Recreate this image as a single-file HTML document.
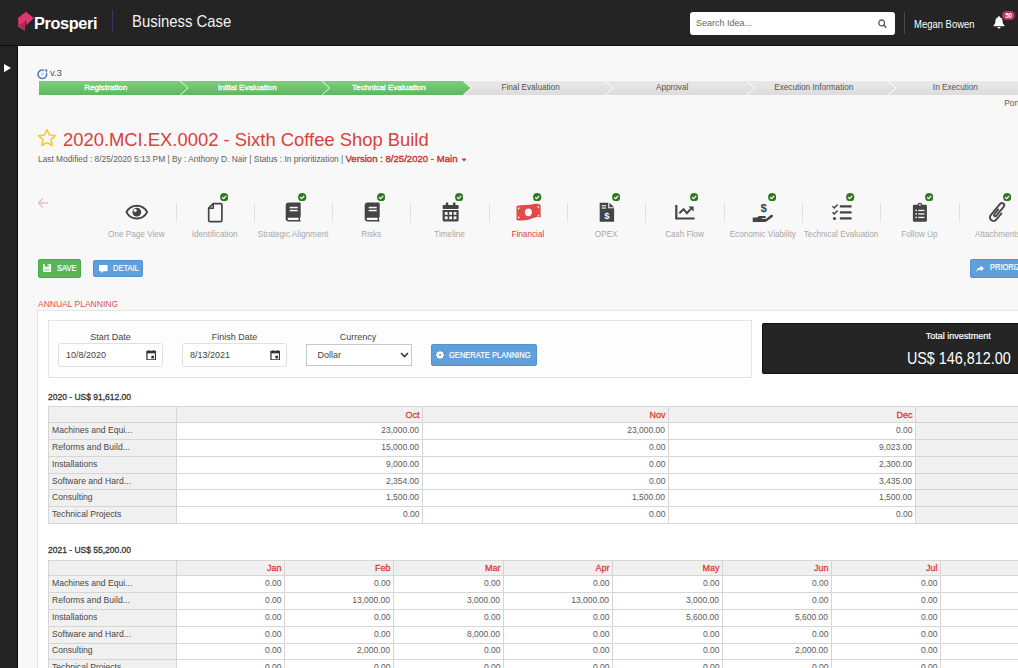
<!DOCTYPE html>
<html lang="en">
<head>
<meta charset="utf-8">
<title>Business Case</title>
<style>
*{box-sizing:border-box;margin:0;padding:0}
html,body{width:1018px;height:668px;overflow:hidden}
body{position:relative;background:#f8f8f8;font-family:"Liberation Sans",sans-serif;color:#444;font-size:9px}
.abs{position:absolute}
#hdr{position:absolute;left:0;top:0;width:1018px;height:46px;background:#242424;border-bottom:1px solid #0d0d0d;z-index:3}
#side{position:absolute;left:0;top:46px;width:18px;height:622px;background:#242424;border-right:1px solid #0d0d0d;z-index:3}
#wst{position:absolute;left:18px;top:46px;width:1000px;height:622px;border-left:2px solid #fff;border-top:2px solid #fff}
#brand{position:absolute;left:34px;top:11.500px;font-weight:bold;font-size:17.200px;color:#fff;line-height:22px;letter-spacing:-0.400px;transform:scaleX(0.948);transform-origin:0 50%}
#hdiv{position:absolute;left:112px;top:10px;width:1px;height:22px;background:#333c5e}
#app{position:absolute;left:131.500px;top:10px;font-size:17px;color:#f2f2f2;line-height:24px;transform:scaleX(0.875);transform-origin:0 50%;white-space:nowrap}
#search{position:absolute;left:690px;top:12px;width:204.500px;height:22.500px;background:#fff;border-radius:3px}
#search span{position:absolute;left:6px;top:0.700px;line-height:21px;font-size:9px;color:#666}
#udiv{position:absolute;left:904px;top:12px;width:1px;height:22px;background:#484848}
#user{position:absolute;left:914px;top:13.600px;line-height:22px;font-size:10.200px;color:#fff;white-space:nowrap;transform:scaleX(0.93);transform-origin:0 50%}
#badge{position:absolute;left:1002px;top:10.800px;width:13px;height:9px;border-radius:4.500px;background:#b9335f;color:#fff;font-size:6.500px;font-weight:bold;line-height:9px;text-align:center;letter-spacing:-0.300px}
</style>
</head>
<body>
<div id="hdr">
  <svg class="abs" style="left:18px;top:11px" width="17" height="21" viewBox="18 11 17 21"><path d="M25.900 11.700 L33.900 18.100 L26.400 25.200 L26.100 20.600 L25.400 20.900 L24.900 30.800 L18.200 26.700 L18.200 17.800 Z" fill="#e1366d"/><path d="M18.300 25.300 L24.900 30.800 L25.400 21 Z" fill="#a82b63"/></svg>
  <div id="brand">Prosperi</div>
  <div id="hdiv"></div>
  <div id="app">Business Case</div>
  <div id="search"><span>Search Idea...</span>
    <svg class="abs" style="left:188px;top:7px" width="9" height="10" viewBox="0 0 9 10"><circle cx="3.700" cy="3.900" r="2.900" fill="none" stroke="#555" stroke-width="1.300"/><path d="M5.800 6.100 L8.200 8.800" stroke="#555" stroke-width="1.500"/></svg>
  </div>
  <div id="udiv"></div>
  <div id="user">Megan Bowen</div>
  <svg class="abs" style="left:993px;top:16px" width="12" height="13" viewBox="0 0 12 13"><path d="M6 0.300 C5.300 0.300 5 0.800 5 1.300 C3 1.900 2.400 3.600 2.400 5.300 C2.400 7.600 1.600 8.400 0.600 9.300 L0.600 10.300 L11.400 10.300 L11.400 9.300 C10.400 8.400 9.600 7.600 9.600 5.300 C9.600 3.600 9 1.900 7 1.300 C7 0.800 6.700 0.300 6 0.300 Z M4.500 11 A1.500 1.500 0 0 0 7.500 11 Z" fill="#fff"/></svg>
  <div id="badge">50</div>
</div>
<div id="side"><svg class="abs" style="left:3.800px;top:18px" width="7" height="8.200" viewBox="0 0 7 9" preserveAspectRatio="none"><path d="M0 0 L7 4.5 L0 9 Z" fill="#fff"/></svg></div>

<style>
#ver{position:absolute;left:50px;top:67.100px;font-size:9.600px;line-height:12px;color:#50555c;letter-spacing:-0.150px}
#steps{position:absolute;left:39px;top:81px;width:979px;height:14px;overflow:hidden}
#steps svg{position:absolute;left:0;top:0}
.st{position:absolute;top:0;height:14px;line-height:14px;font-size:8.200px;text-align:center;width:141.6px;white-space:nowrap}
.st.g{color:#fff;font-size:8.100px;-webkit-text-stroke:0.300px #fff}
.st.n{color:#555}
#port{position:absolute;left:1004.300px;top:97px;font-size:8.350px;line-height:12px;color:#606060}
</style>
<svg class="abs" style="left:37.400px;top:68.600px" width="11" height="11" viewBox="0 0 11 11"><path d="M9.450 4.200 A4.300 4.300 0 1 1 7.100 1.400" fill="none" stroke="#4a80b8" stroke-width="1.500"/><path d="M7.600 0 L10.400 0.800 L9.800 4.300 Z" fill="#4a80b8"/><path d="M4.500 6.400 L6.300 4" stroke="#9dbfe0" stroke-width="1.300"/></svg><div id="ver">v.3</div>
<div id="steps"><svg width="979" height="14" viewBox="0 0 979 14"><defs><linearGradient id="gg" x1="0" y1="0" x2="0" y2="1"><stop offset="0" stop-color="#7fce80"/><stop offset="1" stop-color="#5cb85c"/></linearGradient><linearGradient id="gn" x1="0" y1="0" x2="0" y2="1"><stop offset="0" stop-color="#e9e9e9"/><stop offset="1" stop-color="#dcdcdc"/></linearGradient></defs><rect x="0" y="0" width="979" height="14" fill="url(#gn)"/><path d="M0 0 H423.8 L431.8 7 L423.8 14 H0 Z" fill="url(#gg)"/><path d="M424.3 0 L432.3 7 L424.3 14" fill="none" stroke="#fbfbfb" stroke-width="1"/><path d="M141.1 0 L149.1 7 L141.1 14" fill="none" stroke="#eafbe9" stroke-width="1"/><path d="M282.7 0 L290.7 7 L282.7 14" fill="none" stroke="#eafbe9" stroke-width="1"/><path d="M565.9 0 L573.9 7 L565.9 14" fill="none" stroke="#fff" stroke-width="1"/><path d="M707.5 0 L715.5 7 L707.5 14" fill="none" stroke="#fff" stroke-width="1"/><path d="M849.1 0 L857.1 7 L849.1 14" fill="none" stroke="#fff" stroke-width="1"/></svg><div class="st g" style="left:-4.0px">Registration</div><div class="st g" style="left:137.6px">Initial Evaluation</div><div class="st g" style="left:279.2px">Technical Evaluation</div><div class="st n" style="left:420.8px">Final Evaluation</div><div class="st n" style="left:562.4px">Approval</div><div class="st n" style="left:704.0px">Execution Information</div><div class="st n" style="left:845.6px">In Execution</div></div><div id="port">Port</div>


<style>
#title{position:absolute;left:63px;top:126.500px;font-size:18.4px;line-height:26px;color:#d9413d;white-space:nowrap;transform-origin:0 50%}
#sub{position:absolute;left:38px;top:152.600px;font-size:8.350px;line-height:12px;color:#606060;white-space:nowrap}
#sub b{color:#c9302c;font-size:9.600px;font-weight:normal;-webkit-text-stroke:0.350px #c9302c}
</style>
<svg class="abs" style="left:37px;top:128px" width="20" height="19" viewBox="0 0 20 19"><path d="M10 1.6 L12.5 7 L18.4 7.7 L14 11.7 L15.2 17.5 L10 14.6 L4.800 17.5 L6 11.7 L1.600 7.7 L7.500 7 Z" fill="none" stroke="#f8c830" stroke-width="1.6" stroke-linejoin="round"/></svg>
<div id="title">2020.MCI.EX.0002 - Sixth Coffee Shop Build</div>
<div id="sub">Last Modified : 8/25/2020 5:13 PM | By : Anthony D. Nair | Status : In prioritization | <b>Version : 8/25/2020 - Main</b></div>
<svg class="abs" style="left:461px;top:158px" width="6" height="4" viewBox="0 0 6 4"><path d="M0.500 0.500 L5.500 0.500 L3 3.500 Z" fill="#d32f2f"/></svg>


<!--ICONS-START--><style>
.ic{position:absolute;top:199px;width:26px;height:26px}
.lb{position:absolute;top:228.700px;width:100px;text-align:center;font-size:8.200px;line-height:12px;color:#a8a8a8;white-space:nowrap}
.lb.on{color:#d9413d}
.dv{position:absolute;top:203px;width:1px;height:19px;background:#e2e2e2}
.ck{position:absolute;top:193px;width:8.400px;height:8.400px}
</style>
<svg class="abs" style="left:37px;top:197px" width="13" height="12" viewBox="0 0 13 12"><path d="M11.500 6 H1.500 M5.800 1.500 L1.300 6 L5.800 10.500" fill="none" stroke="#f3b9c4" stroke-width="1.300"/></svg>
<svg class="ic" style="left:123.75px" viewBox="0 0 26 26"><path d="M2.400 13.100 C5.200 8 8.800 6.700 12.800 6.700 C16.800 6.700 20.400 8 23.200 13.100 C20.400 18.200 16.800 19.500 12.800 19.500 C8.800 19.500 5.200 18.200 2.400 13.100 Z" fill="none" stroke="#444" stroke-width="1.900" stroke-linejoin="round"/><circle cx="12.800" cy="13.100" r="4.400" fill="#444"/><circle cx="11.200" cy="11.400" r="1.600" fill="#f8f8f8"/></svg><div class="lb" style="left:86.40px">One Page View</div><div class="dv" style="left:175.50px"></div>
<svg class="ic" style="left:202.06px" viewBox="0 0 26 26"><path d="M11.300 4.600 H18.500 Q19.900 4.600 19.900 6 V21.200 Q19.900 22.600 18.500 22.600 H8.100 Q6.700 22.600 6.700 21.200 V9.200 Z" fill="none" stroke="#444" stroke-width="1.700" stroke-linejoin="round"/><path d="M11.300 4.600 V9.200 H6.700" fill="none" stroke="#444" stroke-width="1.500" stroke-linejoin="round"/></svg><svg class="ck" style="left:220.00px" viewBox="0 0 9 9"><circle cx="4.500" cy="4.500" r="4.400" fill="#2c7a1f"/><path d="M2.300 4.600 L3.900 6.100 L6.700 3.100" fill="none" stroke="#fff" stroke-width="1.400"/></svg><div class="lb" style="left:164.70px">Identification</div><div class="dv" style="left:253.80px"></div>
<svg class="ic" style="left:280.37px" viewBox="0 0 26 26"><path d="M8.700 3.600 H19.700 Q20.700 3.600 20.700 4.600 V17.600 Q20.700 18.400 20 18.600 V21.100 Q20.700 21.300 20.700 21.900 Q20.700 22.600 20 22.600 H8.700 Q5.700 22.600 5.700 19.600 V6.600 Q5.700 3.600 8.700 3.600 Z" fill="#444"/><rect x="9.700" y="7.800" width="8" height="1.500" fill="#f8f8f8"/><rect x="9.700" y="10.800" width="8" height="1.500" fill="#f8f8f8"/><path d="M8.700 18.800 H18.500 V21 H8.700 Q7.600 21 7.600 19.900 Q7.600 18.800 8.700 18.800 Z" fill="#f8f8f8"/></svg><svg class="ck" style="left:298.30px" viewBox="0 0 9 9"><circle cx="4.500" cy="4.500" r="4.400" fill="#2c7a1f"/><path d="M2.300 4.600 L3.900 6.100 L6.700 3.100" fill="none" stroke="#fff" stroke-width="1.400"/></svg><div class="lb" style="left:243.00px">Strategic Alignment</div><div class="dv" style="left:332.10px"></div>
<svg class="ic" style="left:358.68px" viewBox="0 0 26 26"><path d="M8.700 3.600 H19.700 Q20.700 3.600 20.700 4.600 V17.600 Q20.700 18.400 20 18.600 V21.100 Q20.700 21.300 20.700 21.900 Q20.700 22.600 20 22.600 H8.700 Q5.700 22.600 5.700 19.600 V6.600 Q5.700 3.600 8.700 3.600 Z" fill="#444"/><rect x="9.700" y="7.800" width="8" height="1.500" fill="#f8f8f8"/><rect x="9.700" y="10.800" width="8" height="1.500" fill="#f8f8f8"/><path d="M8.700 18.800 H18.500 V21 H8.700 Q7.600 21 7.600 19.900 Q7.600 18.800 8.700 18.800 Z" fill="#f8f8f8"/></svg><svg class="ck" style="left:376.60px" viewBox="0 0 9 9"><circle cx="4.500" cy="4.500" r="4.400" fill="#2c7a1f"/><path d="M2.300 4.600 L3.900 6.100 L6.700 3.100" fill="none" stroke="#fff" stroke-width="1.400"/></svg><div class="lb" style="left:321.30px">Risks</div><div class="dv" style="left:410.40px"></div>
<svg class="ic" style="left:436.99px" viewBox="0 0 26 26"><g transform="translate(0.6,0.100)"><rect x="5" y="6" width="16" height="3.800" rx="1" fill="#444"/><rect x="8.200" y="3.500" width="2.400" height="4" rx="0.500" fill="#444"/><rect x="15.400" y="3.500" width="2.400" height="4" rx="0.500" fill="#444"/><path d="M5 11 H21 V21 Q21 22.500 19.500 22.500 H6.500 Q5 22.500 5 21 Z" fill="#444"/><rect x="7.2" y="12.9" width="2.800" height="2.800" fill="#f8f8f8"/><rect x="11.6" y="12.9" width="2.800" height="2.800" fill="#f8f8f8"/><rect x="16.0" y="12.9" width="2.800" height="2.800" fill="#f8f8f8"/><rect x="7.2" y="17.3" width="2.800" height="2.800" fill="#f8f8f8"/><rect x="11.6" y="17.3" width="2.800" height="2.800" fill="#f8f8f8"/><rect x="16.0" y="17.3" width="2.800" height="2.800" fill="#f8f8f8"/></g></svg><svg class="ck" style="left:454.90px" viewBox="0 0 9 9"><circle cx="4.500" cy="4.500" r="4.400" fill="#2c7a1f"/><path d="M2.300 4.600 L3.900 6.100 L6.700 3.100" fill="none" stroke="#fff" stroke-width="1.400"/></svg><div class="lb" style="left:399.60px">Timeline</div><div class="dv" style="left:488.70px"></div>
<svg class="ic" style="left:515.30px" viewBox="0 0 26 26"><path d="M1.500 7 C7 5.600 13 6.600 19 5 C22 4.500 24 5 25.600 5.900 V18.400 C21 17 17 20.500 10 21.300 C6 21.800 3.500 21.500 1.500 21 Z" fill="#e04a4a"/><ellipse cx="13.400" cy="13.300" rx="3.500" ry="3.900" fill="#f8f8f8"/><path d="M3 9 L5.400 8.300 L3 11.200 Z M24 17 L21.800 17.800 L24 15 Z M3 19.300 L3 17.200 L5.200 19 Z M24 7.200 L24 9.400 L21.800 7.600Z" fill="#f8f8f8"/></svg><svg class="ck" style="left:533.20px" viewBox="0 0 9 9"><circle cx="4.500" cy="4.500" r="4.400" fill="#2c7a1f"/><path d="M2.300 4.600 L3.900 6.100 L6.700 3.100" fill="none" stroke="#fff" stroke-width="1.400"/></svg><div class="lb on" style="left:477.90px">Financial</div><div class="dv" style="left:567.00px"></div>
<svg class="ic" style="left:593.61px" viewBox="0 0 26 26"><g transform="translate(-0.3,0.200)"><path d="M6 3.500 H14.500 V9 H20.400 V22.500 H6 Z" fill="#444"/><path d="M15.700 3.500 L20.400 8 H15.700 Z" fill="#444"/><rect x="8" y="6" width="4.400" height="1.100" fill="#f8f8f8"/><rect x="8" y="8.300" width="4.400" height="1.100" fill="#f8f8f8"/><text x="13.300" y="20.200" font-family="Liberation Sans, sans-serif" font-size="9.500" font-weight="bold" fill="#f8f8f8" text-anchor="middle">$</text></g></svg><svg class="ck" style="left:611.50px" viewBox="0 0 9 9"><circle cx="4.500" cy="4.500" r="4.400" fill="#2c7a1f"/><path d="M2.300 4.600 L3.900 6.100 L6.700 3.100" fill="none" stroke="#fff" stroke-width="1.400"/></svg><div class="lb" style="left:556.20px">OPEX</div><div class="dv" style="left:645.30px"></div>
<svg class="ic" style="left:671.92px" viewBox="0 0 26 26"><path d="M4.300 6.100 V19.500 H22.600" fill="none" stroke="#444" stroke-width="2.200"/><path d="M7.300 14.200 L11.600 10.200 L14.900 14.200 L19.300 9.400" fill="none" stroke="#444" stroke-width="2"/><path d="M16.400 7.400 H21.600 V12.600 Z" fill="#444"/></svg><svg class="ck" style="left:689.80px" viewBox="0 0 9 9"><circle cx="4.500" cy="4.500" r="4.400" fill="#2c7a1f"/><path d="M2.300 4.600 L3.900 6.100 L6.700 3.100" fill="none" stroke="#fff" stroke-width="1.400"/></svg><div class="lb" style="left:634.50px">Cash Flow</div><div class="dv" style="left:723.60px"></div>
<svg class="ic" style="left:750.23px" viewBox="0 0 26 26"><text x="13.600" y="13" font-family="Liberation Sans, sans-serif" font-size="11.500" font-weight="bold" fill="#444" text-anchor="middle">$</text><g transform="translate(0.2,1.400)"><path d="M2.500 17 H6.500 L9 15.500 H14.500 Q15.800 15.500 15.800 16.600 Q15.800 17.600 14.500 17.600 H11.500 V18.300 H16 L20.600 14.700 Q21.800 13.900 22.600 14.800 Q23.200 15.700 22.300 16.500 L17 20.700 Q16 21.500 14.800 21.500 H2.500 Z" fill="#444"/></g></svg><svg class="ck" style="left:768.10px" viewBox="0 0 9 9"><circle cx="4.500" cy="4.500" r="4.400" fill="#2c7a1f"/><path d="M2.300 4.600 L3.900 6.100 L6.700 3.100" fill="none" stroke="#fff" stroke-width="1.400"/></svg><div class="lb" style="left:712.80px">Economic Viability</div><div class="dv" style="left:801.90px"></div>
<svg class="ic" style="left:828.54px" viewBox="0 0 26 26"><rect x="10.800" y="6.200" width="11.800" height="2.300" rx="0.600" fill="#444"/><rect x="10.800" y="12.200" width="11.800" height="2.300" rx="0.600" fill="#444"/><rect x="10.800" y="18.300" width="11.800" height="2.300" rx="0.600" fill="#444"/><path d="M3.500 7.200 L5.300 8.900 L8.600 5.400 M3.500 13.200 L5.300 14.900 L8.600 11.400" fill="none" stroke="#444" stroke-width="1.500"/><circle cx="5.500" cy="19.500" r="1.600" fill="#444"/></svg><svg class="ck" style="left:846.40px" viewBox="0 0 9 9"><circle cx="4.500" cy="4.500" r="4.400" fill="#2c7a1f"/><path d="M2.300 4.600 L3.900 6.100 L6.700 3.100" fill="none" stroke="#fff" stroke-width="1.400"/></svg><div class="lb" style="left:791.10px">Technical Evaluation</div><div class="dv" style="left:880.20px"></div>
<svg class="ic" style="left:906.85px" viewBox="0 0 26 26"><g transform="translate(-0.1,0.300)"><path d="M7.200 5.500 H10.600 Q10.800 3.400 13 3.400 Q15.200 3.400 15.400 5.500 H18.800 Q20 5.500 20 6.700 V21.200 Q20 22.400 18.800 22.400 H7.200 Q6 22.400 6 21.200 V6.700 Q6 5.500 7.200 5.500 Z" fill="#444"/><circle cx="13" cy="5.600" r="0.900" fill="#f8f8f8"/><rect x="11.400" y="10.500" width="6.200" height="1.300" fill="#f8f8f8"/><rect x="11.400" y="14" width="6.200" height="1.300" fill="#f8f8f8"/><rect x="11.400" y="17.500" width="6.200" height="1.300" fill="#f8f8f8"/><rect x="8.500" y="10.400" width="1.500" height="1.500" fill="#f8f8f8"/><rect x="8.500" y="13.900" width="1.500" height="1.500" fill="#f8f8f8"/><rect x="8.500" y="17.400" width="1.500" height="1.500" fill="#f8f8f8"/></g></svg><svg class="ck" style="left:924.70px" viewBox="0 0 9 9"><circle cx="4.500" cy="4.500" r="4.400" fill="#2c7a1f"/><path d="M2.300 4.600 L3.900 6.100 L6.700 3.100" fill="none" stroke="#fff" stroke-width="1.400"/></svg><div class="lb" style="left:869.40px">Follow Up</div><div class="dv" style="left:958.50px"></div>
<svg class="ic" style="left:985.16px" viewBox="0 0 26 26"><g transform="translate(12.750,13.250) rotate(40)"><path d="M3.600 -1.500 V6.650 A3.600 3.600 0 0 1 -3.600 6.650 V-7.950 A2.300 2.300 0 0 1 1 -7.950 V3.800 A1.200 1.200 0 0 1 -1.400 3.800 V-2.500" fill="none" stroke="#4a4a4a" stroke-width="1.900" stroke-linecap="round"/></g></svg><svg class="ck" style="left:1003.00px" viewBox="0 0 9 9"><circle cx="4.500" cy="4.500" r="4.400" fill="#2c7a1f"/><path d="M2.300 4.600 L3.900 6.100 L6.700 3.100" fill="none" stroke="#fff" stroke-width="1.400"/></svg><div class="lb" style="left:947.70px">Attachments</div>
<!--ICONS-END-->
<style>
.btn{position:absolute;height:18.5px;border-radius:3px;color:#fff;font-size:8.700px;line-height:18.5px;white-space:nowrap;-webkit-text-stroke:0.200px #fff}
.btn span{position:absolute;top:0.300px;transform:scaleX(0.861);transform-origin:0 50%}
.green{background:#58b658;box-shadow:inset 0 0 0 1px #4aa94a}
.blue{background:#5f9fdb;box-shadow:inset 0 0 0 1px #5192d4}
#ap{position:absolute;left:38px;top:297.800px;font-size:9px;line-height:12px;color:#d9534f;white-space:nowrap;transform:scaleX(0.945);transform-origin:0 50%}
#panel{position:absolute;left:37px;top:310px;width:990px;height:370px;background:#fff;border:1px solid #e6e6e6}
#fbox{position:absolute;left:48px;top:320px;width:704px;height:57.5px;background:#fdfdfd;border:1px solid #e4e4e4}
.fl{position:absolute;top:331px;width:104px;text-align:center;font-size:9px;line-height:12px;color:#444}
.inp{position:absolute;top:343px;width:104.500px;height:24px;background:#fff;border:1px solid #e0e0e0;border-radius:3px;font-size:9px;line-height:22px;color:#444;padding-left:7px}
.sel{position:absolute;left:305.5px;top:343.5px;width:106px;height:22.5px;background:#fff;border:1px solid #c8c8c8;font-size:9px;line-height:20.5px;color:#444;padding-left:11px}
#tot{position:absolute;left:762px;top:323px;width:260px;height:51px;background:#252525;border-radius:2.500px;color:#fff;box-shadow:inset 0 0 0 1px #121212}
#tot .a{position:absolute;right:31.300px;top:6.700px;font-size:9px;line-height:12px;white-space:nowrap;-webkit-text-stroke:0.200px #fff}
#tot .b{position:absolute;right:11.700px;top:26.300px;font-size:16px;line-height:20px;white-space:nowrap;transform:scaleX(0.897);transform-origin:100% 50%}
</style>
<div class="btn green" style="left:38px;top:259px;width:42.5px"><svg class="abs" style="left:5.200px;top:5.300px" width="8" height="8" viewBox="0 0 8 8"><path d="M0 0 H8 V8 H0 Z" fill="#fff"/><rect x="1.800" y="0" width="4.400" height="2.600" fill="#4cae4c"/><rect x="4.600" y="0" width="1" height="2" fill="#fff"/><rect x="1.200" y="4.600" width="5.600" height="2.400" fill="#bfe3bf"/></svg><span id="tsave" style="left:18.500px">SAVE</span></div>
<div class="btn blue" style="left:92.500px;top:259.500px;width:50.500px;height:17.500px;line-height:17.500px"><svg class="abs" style="left:6.700px;top:5px" width="8.600" height="8.600" viewBox="0 0 9 9"><path d="M1 0 H8 Q9 0 9 1 V5.600 Q9 6.600 8 6.600 H4.600 L2.400 8.600 V6.600 H1 Q0 6.600 0 5.600 V1 Q0 0 1 0 Z" fill="#fff"/></svg><span id="tdet" style="left:20px">DETAIL</span></div>
<div class="btn blue" style="left:970px;top:259px;width:60px;height:19px;line-height:17.600px"><svg class="abs" style="left:6px;top:5.500px" width="8" height="8" viewBox="0 0 8 8"><path d="M4.600 0.600 L8 3.400 L4.600 6.200 V4.400 Q1.800 4.400 0.400 6.800 Q0.600 2.600 4.600 2.400 Z" fill="#fff"/></svg><span id="tpri" style="left:20px">PRIORIZE</span></div>
<div id="ap">ANNUAL PLANNING</div>
<div id="panel"></div>
<div id="fbox"></div>
<div class="fl" style="left:58.500px" id="l1">Start Date</div>
<div class="inp" style="left:58px"><span id="d1">10/8/2020</span><svg class="abs" style="left:86.500px;top:5.800px" width="10.500" height="10.500" viewBox="0 0 11 11"><path d="M1 1.500 H10 V10.300 H1 Z" fill="none" stroke="#333" stroke-width="1.300"/><rect x="1" y="1.500" width="9" height="2" fill="#333"/><rect x="2.600" y="0.200" width="1.300" height="2" fill="#333"/><rect x="7.100" y="0.200" width="1.300" height="2" fill="#333"/><rect x="5.600" y="6" width="2.800" height="2.800" fill="#333"/></svg></div>
<div class="fl" style="left:182.500px" id="l2">Finish Date</div>
<div class="inp" style="left:182px"><span id="d2">8/13/2021</span><svg class="abs" style="left:86.500px;top:5.800px" width="10.500" height="10.500" viewBox="0 0 11 11"><path d="M1 1.500 H10 V10.300 H1 Z" fill="none" stroke="#333" stroke-width="1.300"/><rect x="1" y="1.500" width="9" height="2" fill="#333"/><rect x="2.600" y="0.200" width="1.300" height="2" fill="#333"/><rect x="7.100" y="0.200" width="1.300" height="2" fill="#333"/><rect x="5.600" y="6" width="2.800" height="2.800" fill="#333"/></svg></div>
<div class="fl" style="left:306px" id="l3">Currency</div>
<div class="sel"><span id="dol">Dollar</span><svg class="abs" style="left:93px;top:7.500px" width="9" height="6" viewBox="0 0 9 6"><path d="M1 1 L4.500 4.600 L8 1" fill="none" stroke="#333" stroke-width="1.500"/></svg></div>
<div class="btn blue" style="left:430.500px;top:343.500px;width:106px;height:22.500px;line-height:22.500px;font-size:8.750px"><svg class="abs" style="left:5.500px;top:7px" width="8" height="8" viewBox="0 0 8 8"><circle cx="4" cy="4" r="2.300" fill="none" stroke="#fff" stroke-width="1.800"/><path d="M4 0 V8 M0 4 H8 M1.200 1.200 L6.800 6.800 M6.800 1.200 L1.200 6.800" stroke="#fff" stroke-width="1.300"/><circle cx="4" cy="4" r="1.100" fill="#5b9bd5"/></svg><span id="tgen" style="left:18.500px">GENERATE PLANNING</span></div>
<div id="tot"><div class="a">Total investment</div><div class="b">US$ 146,812.00</div></div>

<!--PANEL-->

<!--TABLES-START--><style>
.yl{position:absolute;left:48px;font-size:9px;line-height:12px;color:#333;white-space:nowrap;-webkit-text-stroke:0.300px #333;transform:scaleX(0.943);transform-origin:0 50%}
.tb{position:absolute;left:48px;width:980px;overflow:hidden;background:#fff}
.tb div{position:absolute}
.hl{left:0;width:980px;height:1px;background:#d6d6d6}
.vl{top:0;width:1px;background:#d6d6d6}
.gz{background:#f0f0f0}
.rn{left:4px;font-size:9px;color:#484848;white-space:nowrap;transform:scaleX(0.955);transform-origin:0 50%}
.hd{font-size:9px;color:#dc403b;text-align:right;white-space:nowrap;-webkit-text-stroke:0.300px #dc403b}
.hd span{transform:none !important}
.nm{font-size:9px;color:#5a5a5a;text-align:right;white-space:nowrap}
.hd span,.nm span{display:inline-block;transform:scaleX(0.945);transform-origin:100% 50%}
</style>
<div class="yl" style="top:391px">2020 - US$ 91,612.00</div>
<div class="tb" style="top:406px;height:118px"><div class="gz" style="left:0;top:0;width:980px;height:16px"></div><div class="gz" style="left:0;top:0;width:128px;height:118px"></div><div class="gz" style="left:867px;top:0;width:113px;height:118px"></div><div class="hl" style="top:0px"></div><div class="hl" style="top:16px"></div><div class="hl" style="top:33px"></div><div class="hl" style="top:50px"></div><div class="hl" style="top:67px"></div><div class="hl" style="top:83px"></div><div class="hl" style="top:100px"></div><div class="hl" style="top:117px"></div><div class="vl" style="left:0;height:118px"></div><div class="vl" style="left:128px;height:118px"></div><div class="vl" style="left:374px;height:118px"></div><div class="vl" style="left:620px;height:118px"></div><div class="vl" style="left:867px;height:118px"></div><div class="hd" style="left:128px;width:243.5px;top:1px;height:15px;line-height:16px"><span>Oct</span></div><div class="hd" style="left:374px;width:243.5px;top:1px;height:15px;line-height:16px"><span>Nov</span></div><div class="hd" style="left:620px;width:244.5px;top:1px;height:15px;line-height:16px"><span>Dec</span></div>
<div class="rn" style="top:17px;height:16px;line-height:15px">Machines and Equi...</div><div class="nm" style="left:128px;width:243.5px;top:17px;height:16px;line-height:15px"><span>23,000.00</span></div><div class="nm" style="left:374px;width:243.5px;top:17px;height:16px;line-height:15px"><span>23,000.00</span></div><div class="nm" style="left:620px;width:244.5px;top:17px;height:16px;line-height:15px"><span>0.00</span></div>
<div class="rn" style="top:34px;height:16px;line-height:15px">Reforms and Build...</div><div class="nm" style="left:128px;width:243.5px;top:34px;height:16px;line-height:15px"><span>15,000.00</span></div><div class="nm" style="left:374px;width:243.5px;top:34px;height:16px;line-height:15px"><span>0.00</span></div><div class="nm" style="left:620px;width:244.5px;top:34px;height:16px;line-height:15px"><span>9,023.00</span></div>
<div class="rn" style="top:51px;height:16px;line-height:15px">Installations</div><div class="nm" style="left:128px;width:243.5px;top:51px;height:16px;line-height:15px"><span>9,000.00</span></div><div class="nm" style="left:374px;width:243.5px;top:51px;height:16px;line-height:15px"><span>0.00</span></div><div class="nm" style="left:620px;width:244.5px;top:51px;height:16px;line-height:15px"><span>2,300.00</span></div>
<div class="rn" style="top:68px;height:15px;line-height:14px">Software and Hard...</div><div class="nm" style="left:128px;width:243.5px;top:68px;height:15px;line-height:14px"><span>2,354.00</span></div><div class="nm" style="left:374px;width:243.5px;top:68px;height:15px;line-height:14px"><span>0.00</span></div><div class="nm" style="left:620px;width:244.5px;top:68px;height:15px;line-height:14px"><span>3,435.00</span></div>
<div class="rn" style="top:84px;height:16px;line-height:15px">Consulting</div><div class="nm" style="left:128px;width:243.5px;top:84px;height:16px;line-height:15px"><span>1,500.00</span></div><div class="nm" style="left:374px;width:243.5px;top:84px;height:16px;line-height:15px"><span>1,500.00</span></div><div class="nm" style="left:620px;width:244.5px;top:84px;height:16px;line-height:15px"><span>1,500.00</span></div>
<div class="rn" style="top:101px;height:16px;line-height:15px">Technical Projects</div><div class="nm" style="left:128px;width:243.5px;top:101px;height:16px;line-height:15px"><span>0.00</span></div><div class="nm" style="left:374px;width:243.5px;top:101px;height:16px;line-height:15px"><span>0.00</span></div><div class="nm" style="left:620px;width:244.5px;top:101px;height:16px;line-height:15px"><span>0.00</span></div></div>
<div class="yl" style="top:544px">2021 - US$ 55,200.00</div>
<div class="tb" style="top:560px;height:117px"><div class="gz" style="left:0;top:0;width:980px;height:15px"></div><div class="gz" style="left:0;top:0;width:128px;height:117px"></div><div class="hl" style="top:0px"></div><div class="hl" style="top:15px"></div><div class="hl" style="top:32px"></div><div class="hl" style="top:49px"></div><div class="hl" style="top:66px"></div><div class="hl" style="top:83px"></div><div class="hl" style="top:99px"></div><div class="hl" style="top:116px"></div><div class="vl" style="left:0;height:117px"></div><div class="vl" style="left:128px;height:117px"></div><div class="vl" style="left:236px;height:117px"></div><div class="vl" style="left:345px;height:117px"></div><div class="vl" style="left:455px;height:117px"></div><div class="vl" style="left:564px;height:117px"></div><div class="vl" style="left:674px;height:117px"></div><div class="vl" style="left:783px;height:117px"></div><div class="vl" style="left:892px;height:117px"></div><div class="hd" style="left:128px;width:105.5px;top:1px;height:14px;line-height:15px"><span>Jan</span></div><div class="hd" style="left:236px;width:106.5px;top:1px;height:14px;line-height:15px"><span>Feb</span></div><div class="hd" style="left:345px;width:107.5px;top:1px;height:14px;line-height:15px"><span>Mar</span></div><div class="hd" style="left:455px;width:106.5px;top:1px;height:14px;line-height:15px"><span>Apr</span></div><div class="hd" style="left:564px;width:107.5px;top:1px;height:14px;line-height:15px"><span>May</span></div><div class="hd" style="left:674px;width:106.5px;top:1px;height:14px;line-height:15px"><span>Jun</span></div><div class="hd" style="left:783px;width:106.5px;top:1px;height:14px;line-height:15px"><span>Jul</span></div>
<div class="rn" style="top:16px;height:16px;line-height:14px">Machines and Equi...</div><div class="nm" style="left:128px;width:105.5px;top:16px;height:16px;line-height:14px"><span>0.00</span></div><div class="nm" style="left:236px;width:106.5px;top:16px;height:16px;line-height:14px"><span>0.00</span></div><div class="nm" style="left:345px;width:107.5px;top:16px;height:16px;line-height:14px"><span>0.00</span></div><div class="nm" style="left:455px;width:106.5px;top:16px;height:16px;line-height:14px"><span>0.00</span></div><div class="nm" style="left:564px;width:107.5px;top:16px;height:16px;line-height:14px"><span>0.00</span></div><div class="nm" style="left:674px;width:106.5px;top:16px;height:16px;line-height:14px"><span>0.00</span></div><div class="nm" style="left:783px;width:106.5px;top:16px;height:16px;line-height:14px"><span>0.00</span></div>
<div class="rn" style="top:33px;height:16px;line-height:14px">Reforms and Build...</div><div class="nm" style="left:128px;width:105.5px;top:33px;height:16px;line-height:14px"><span>0.00</span></div><div class="nm" style="left:236px;width:106.5px;top:33px;height:16px;line-height:14px"><span>13,000.00</span></div><div class="nm" style="left:345px;width:107.5px;top:33px;height:16px;line-height:14px"><span>3,000.00</span></div><div class="nm" style="left:455px;width:106.5px;top:33px;height:16px;line-height:14px"><span>13,000.00</span></div><div class="nm" style="left:564px;width:107.5px;top:33px;height:16px;line-height:14px"><span>3,000.00</span></div><div class="nm" style="left:674px;width:106.5px;top:33px;height:16px;line-height:14px"><span>0.00</span></div><div class="nm" style="left:783px;width:106.5px;top:33px;height:16px;line-height:14px"><span>0.00</span></div>
<div class="rn" style="top:50px;height:16px;line-height:14px">Installations</div><div class="nm" style="left:128px;width:105.5px;top:50px;height:16px;line-height:14px"><span>0.00</span></div><div class="nm" style="left:236px;width:106.5px;top:50px;height:16px;line-height:14px"><span>0.00</span></div><div class="nm" style="left:345px;width:107.5px;top:50px;height:16px;line-height:14px"><span>0.00</span></div><div class="nm" style="left:455px;width:106.5px;top:50px;height:16px;line-height:14px"><span>0.00</span></div><div class="nm" style="left:564px;width:107.5px;top:50px;height:16px;line-height:14px"><span>5,600.00</span></div><div class="nm" style="left:674px;width:106.5px;top:50px;height:16px;line-height:14px"><span>5,600.00</span></div><div class="nm" style="left:783px;width:106.5px;top:50px;height:16px;line-height:14px"><span>0.00</span></div>
<div class="rn" style="top:67px;height:16px;line-height:14px">Software and Hard...</div><div class="nm" style="left:128px;width:105.5px;top:67px;height:16px;line-height:14px"><span>0.00</span></div><div class="nm" style="left:236px;width:106.5px;top:67px;height:16px;line-height:14px"><span>0.00</span></div><div class="nm" style="left:345px;width:107.5px;top:67px;height:16px;line-height:14px"><span>8,000.00</span></div><div class="nm" style="left:455px;width:106.5px;top:67px;height:16px;line-height:14px"><span>0.00</span></div><div class="nm" style="left:564px;width:107.5px;top:67px;height:16px;line-height:14px"><span>0.00</span></div><div class="nm" style="left:674px;width:106.5px;top:67px;height:16px;line-height:14px"><span>0.00</span></div><div class="nm" style="left:783px;width:106.5px;top:67px;height:16px;line-height:14px"><span>0.00</span></div>
<div class="rn" style="top:84px;height:15px;line-height:13px">Consulting</div><div class="nm" style="left:128px;width:105.5px;top:84px;height:15px;line-height:13px"><span>0.00</span></div><div class="nm" style="left:236px;width:106.5px;top:84px;height:15px;line-height:13px"><span>2,000.00</span></div><div class="nm" style="left:345px;width:107.5px;top:84px;height:15px;line-height:13px"><span>0.00</span></div><div class="nm" style="left:455px;width:106.5px;top:84px;height:15px;line-height:13px"><span>0.00</span></div><div class="nm" style="left:564px;width:107.5px;top:84px;height:15px;line-height:13px"><span>0.00</span></div><div class="nm" style="left:674px;width:106.5px;top:84px;height:15px;line-height:13px"><span>2,000.00</span></div><div class="nm" style="left:783px;width:106.5px;top:84px;height:15px;line-height:13px"><span>0.00</span></div>
<div class="rn" style="top:100px;height:16px;line-height:14px">Technical Projects</div><div class="nm" style="left:128px;width:105.5px;top:100px;height:16px;line-height:14px"><span>0.00</span></div><div class="nm" style="left:236px;width:106.5px;top:100px;height:16px;line-height:14px"><span>0.00</span></div><div class="nm" style="left:345px;width:107.5px;top:100px;height:16px;line-height:14px"><span>0.00</span></div><div class="nm" style="left:455px;width:106.5px;top:100px;height:16px;line-height:14px"><span>0.00</span></div><div class="nm" style="left:564px;width:107.5px;top:100px;height:16px;line-height:14px"><span>0.00</span></div><div class="nm" style="left:674px;width:106.5px;top:100px;height:16px;line-height:14px"><span>0.00</span></div><div class="nm" style="left:783px;width:106.5px;top:100px;height:16px;line-height:14px"><span>0.00</span></div></div>
<!--TABLES-END-->
</body>
</html>
